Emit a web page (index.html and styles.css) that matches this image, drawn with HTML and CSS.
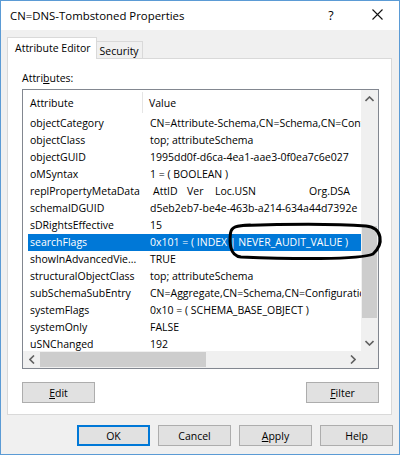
FILE: index.html
```html
<!DOCTYPE html>
<html>
<head>
<meta charset="utf-8">
<link rel="stylesheet" href="styles.css">
</head>
<body>
<div class="window">
  <div class="titlebar">
    <span class="title">CN=DNS-Tombstoned Properties</span>
    <span class="help-btn">?</span>
    <span class="close-btn"><svg width="11" height="11" viewBox="0 0 11 11"><path d="M0.5 0.5 L10.5 10.5 M10.5 0.5 L0.5 10.5" stroke="#111" stroke-width="1.1" fill="none"/></svg></span>
  </div>
  <div class="body">
    <div class="tabs">
      <div class="tab active">Attribute Editor</div>
      <div class="tab">Security</div>
    </div>
    <div class="panel">
      <div class="label">Attri<u>b</u>utes:</div>
      <div class="listview">
        <div class="main">
          <div class="header">
            <div class="hcell c1">Attribute</div>
            <div class="hcell c2">Value</div>
          </div>
          <div class="row"><div class="c1">objectCategory</div><div class="c2">CN=Attribute-Schema,CN=Schema,CN=Configuration,DC=contoso,DC=com</div></div>
          <div class="row"><div class="c1">objectClass</div><div class="c2">top; attributeSchema</div></div>
          <div class="row"><div class="c1">objectGUID</div><div class="c2">1995dd0f-d6ca-4ea1-aae3-0f0ea7c6e027</div></div>
          <div class="row"><div class="c1">oMSyntax</div><div class="c2">1 = ( BOOLEAN )</div></div>
          <div class="row"><div class="c1">replPropertyMetaData</div><div class="c2 meta"><span class="m1">AttID</span><span class="m2">Ver</span><span class="m3">Loc.USN</span><span>Org.DSA</span></div></div>
          <div class="row"><div class="c1">schemaIDGUID</div><div class="c2">d5eb2eb7-be4e-463b-a214-634a44d7392e</div></div>
          <div class="row"><div class="c1">sDRightsEffective</div><div class="c2">15</div></div>
          <div class="row selected"><div class="c1">searchFlags</div><div class="c2">0x101 = ( INDEX | NEVER_AUDIT_VALUE )</div></div>
          <div class="row"><div class="c1">showInAdvancedVie...</div><div class="c2">TRUE</div></div>
          <div class="row"><div class="c1">structuralObjectClass</div><div class="c2">top; attributeSchema</div></div>
          <div class="row"><div class="c1">subSchemaSubEntry</div><div class="c2">CN=Aggregate,CN=Schema,CN=Configuration,DC=contoso,DC=com</div></div>
          <div class="row"><div class="c1">systemFlags</div><div class="c2">0x10 = ( SCHEMA_BASE_OBJECT )</div></div>
          <div class="row"><div class="c1">systemOnly</div><div class="c2">FALSE</div></div>
          <div class="row"><div class="c1">uSNChanged</div><div class="c2">192</div></div>
        </div>
        <div class="vscroll">
          <div class="arrow"><svg width="9" height="6" viewBox="0 0 9 6"><path d="M0.5 5 L4.5 1 L8.5 5" stroke="#606060" stroke-width="1.6" fill="none"/></svg></div>
          <div class="vtrack"><div class="vthumb"></div></div>
          <div class="arrow"><svg width="9" height="6" viewBox="0 0 9 6"><path d="M0.5 1 L4.5 5 L8.5 1" stroke="#606060" stroke-width="1.6" fill="none"/></svg></div>
        </div>
        <div class="hscroll">
          <div class="arrow"><svg width="6" height="9" viewBox="0 0 6 9"><path d="M5 0.5 L1 4.5 L5 8.5" stroke="#606060" stroke-width="1.6" fill="none"/></svg></div>
          <div class="htrack"><div class="hthumb"></div></div>
          <div class="arrow"><svg width="6" height="9" viewBox="0 0 6 9"><path d="M1 0.5 L5 4.5 L1 8.5" stroke="#606060" stroke-width="1.6" fill="none"/></svg></div>
        </div>
        <div class="corner"></div>
      </div>
      <div class="panel-buttons">
        <button class="btn"><u>E</u>dit</button>
        <button class="btn"><u>F</u>ilter</button>
      </div>
    </div>
    <div class="dialog-buttons">
      <button class="btn default">OK</button>
      <button class="btn">Cancel</button>
      <button class="btn"><u>A</u>pply</button>
      <button class="btn">Help</button>
    </div>
  </div>
  <svg class="annotation" width="400" height="455" viewBox="0 0 400 455">
    <path d="M242 225.5 C285 224, 340 224, 366 226 C383 228, 384 244, 373 254 C360 260, 290 259, 241 257 C229 256, 229.5 241, 230.5 233 C231.5 227, 236 225.5, 250 225" stroke="#000" stroke-width="3" fill="none" stroke-linecap="round"/>
  </svg>
</div>
</body>
</html>
```

FILE: styles.css
```css
* { box-sizing: border-box; }
html, body { margin: 0; padding: 0; }
body {
  width: 400px;
  height: 455px;
  font-family: "Open Sans", "Noto Sans", sans-serif;
  font-size: 10.5px;
  color: #000;
  background: #fff;
}
.window {
  position: relative;
  width: 400px;
  height: 455px;
  border: 1px solid #5b9bd5;
  background: #f0f0f0;
  display: flex;
  flex-direction: column;
  overflow: hidden;
}
.titlebar {
  height: 29px;
  background: #fff;
  display: flex;
  align-items: center;
  padding-left: 9px;
  padding-bottom: 1px;
  flex: none;
}
.title {
  font-size: 11.4px;
  flex: 1;
}
.help-btn {
  font-size: 12.5px;
  width: 20px;
  text-align: center;
  margin-right: 31px;
}
.close-btn {
  width: 12px;
  height: 12px;
  display: flex;
  margin-right: 15px;
}
.body {
  padding: 7px 6px 0 6px;
  flex: 1;
  display: flex;
  flex-direction: column;
}
.tabs {
  display: flex;
  align-items: flex-end;
  height: 21px;
  position: relative;
  z-index: 2;
}
.tab {
  height: 17px;
  border: 1px solid #d9d9d9;
  border-bottom: none;
  border-left: none;
  background: #f0f0f0;
  padding: 1px 3px 0 3px;
  display: flex;
  align-items: center;
}
.tab.active {
  height: 22px;
  border-left: 1px solid #d9d9d9;
  background: #fff;
  padding: 0 5px 2px 7px;
  margin-bottom: -1px;
}
.panel {
  width: 385px;
  height: 357px;
  background: #fff;
  border: 1px solid #d9d9d9;
  padding: 12px 0 0 14px;
  flex: none;
}
.label {
  height: 14px;
  line-height: 14px;
  margin-bottom: 4px;
}
.listview {
  width: 357px;
  height: 280px;
  border: 1px solid #828790;
  display: grid;
  grid-template-columns: 338px 17px;
  grid-template-rows: 261px 17px;
}
.main {
  overflow: hidden;
  position: relative;
}
.header {
  display: flex;
  height: 25px;
  align-items: center;
}
.hcell.c1 {
  width: 120px;
  padding-left: 7px;
  border-right: 1px solid #e5e5e5;
  height: 21px;
  display: flex;
  align-items: center;
}
.hcell.c2 {
  padding-left: 6px;
}
.row {
  display: flex;
  height: 17px;
  line-height: 17px;
  margin-left: 5px;
  white-space: nowrap;
}
.row .c1 {
  width: 115px;
  padding-left: 2px;
  overflow: hidden;
  flex: none;
}
.row .c2 {
  padding-left: 7px;
  overflow: hidden;
  flex: 1;
}
.row.selected {
  background: #0078d7;
  color: #fff;
}
.meta { display: flex; }
.meta .m1 { width: 34px; padding-left: 3px; box-sizing: content-box; }
.meta .m2 { width: 28px; }
.meta .m3 { width: 94px; }
.vscroll {
  background: #f0f0f0;
  display: flex;
  flex-direction: column;
}
.vscroll .arrow {
  height: 17px;
  display: flex;
  align-items: center;
  justify-content: center;
  flex: none;
}
.vtrack {
  flex: 1;
  padding: 0 1px;
  display: flex;
  flex-direction: column;
}
.vthumb {
  margin-top: 119px;
  height: 92px;
  background: #cdcdcd;
}
.hscroll {
  background: #f0f0f0;
  display: flex;
}
.hscroll .arrow {
  width: 17px;
  display: flex;
  align-items: center;
  justify-content: center;
  flex: none;
}
.htrack {
  flex: 1;
  padding: 1px 0;
  display: flex;
}
.hthumb {
  width: 166px;
  background: #cdcdcd;
}
.corner { background: #f0f0f0; }
.btn {
  font-family: "Open Sans", "Noto Sans", sans-serif;
  font-size: 10.5px;
  width: 73px;
  height: 21px;
  background: #e1e1e1;
  border: 1px solid #adadad;
  padding: 0;
  color: #000;
}
.btn.default {
  border: 2px solid #0078d7;
}
.panel-buttons {
  display: flex;
  justify-content: space-between;
  width: 357px;
  margin-top: 13px;
}
.dialog-buttons {
  display: flex;
  justify-content: flex-end;
  gap: 8px;
  margin-top: 10px;
}
.annotation {
  position: absolute;
  left: -1px;
  top: -1px;
  pointer-events: none;
}
```
